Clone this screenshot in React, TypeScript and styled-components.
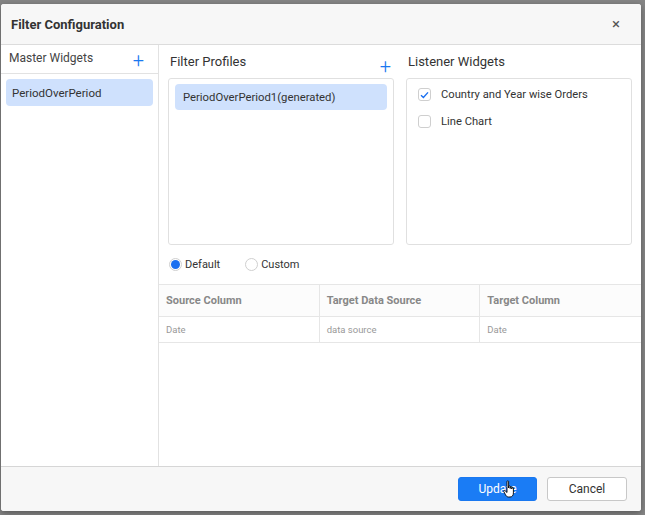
import React from "react";
import styled, { createGlobalStyle } from "styled-components";

const Global = createGlobalStyle`
  html, body { margin: 0; padding: 0; }
  body {
    background: #858585;
    font-family: Roboto, "Noto Sans", "Liberation Sans", sans-serif;
    width: 645px; height: 515px; overflow: hidden;
  }
`;

const Page = styled.div`
  width: 645px;
  height: 515px;
  padding: 4px 4px 4px 1px;
  box-sizing: border-box;
`;

const Dialog = styled.div`
  width: 640px;
  height: 507px;
  background: #fff;
  border-radius: 3px;
  box-shadow: 0 2px 6px rgba(0,0,0,0.35);
  display: flex;
  flex-direction: column;
  overflow: hidden;
`;

const Header = styled.div`
  height: 41px;
  flex: none;
  box-sizing: border-box;
  background: #f7f7f7;
  border-bottom: 1px solid #dcdcdc;
  display: flex;
  align-items: center;
  justify-content: space-between;
  padding: 0 21px 0 10px;
`;

const Title = styled.div`
  font-size: 13px;
  font-weight: 700;
  color: #333;
`;

const Close = styled.div`
  font-size: 15px;
  color: #555;
  line-height: 1;
`;

const Body = styled.div`
  flex: 1;
  display: grid;
  grid-template-columns: 158px 1fr;
  min-height: 0;
`;

const Left = styled.div`
  border-right: 1px solid #e2e2e2;
  display: flex;
  flex-direction: column;
`;

const LeftHead = styled.div`
  height: 29px;
  border-bottom: 1px solid #e2e2e2;
  display: flex;
  align-items: flex-start;
  justify-content: space-between;
  padding: 6px 14px 0 8px;
  box-sizing: border-box;
  font-size: 12px;
  color: #444;
`;

const Plus = styled.span<{ $top?: number }>`
  color: #1a78f0;
  font-size: 20px;
  font-weight: 300;
  line-height: 1;
  margin-top: ${(p) => p.$top ?? 0}px;
`;

const ItemList = styled.div`
  padding: 5px 5px;
`;

const SelItem = styled.div`
  background: #cfe1fd;
  border-radius: 4px;
  height: 27px;
  display: flex;
  align-items: center;
  padding: 0 6px;
  font-size: 11.5px;
  color: #333;
`;

const Right = styled.div`
  display: flex;
  flex-direction: column;
`;

const Columns = styled.div`
  display: grid;
  grid-template-columns: 226px 226px;
  column-gap: 12px;
  padding: 0 9px;
`;

const Col = styled.div`
  display: flex;
  flex-direction: column;
`;

const ColHead = styled.div`
  height: 33px;
  display: flex;
  align-items: flex-start;
  justify-content: space-between;
  padding: 9px 3px 0 2px;
  box-sizing: border-box;
  font-size: 13px;
  color: #333;
`;

const Box = styled.div`
  height: 167px;
  border: 1px solid #e0e0e0;
  border-radius: 3px;
  box-sizing: border-box;
`;

const ProfileList = styled.div`
  padding: 5px 6px;
`;

const ProfileItem = styled(SelItem)`
  height: 26px;
  padding: 0 8px;
  font-size: 11.3px;
`;

const CheckList = styled.div`
  padding: 9px 11px;
  display: flex;
  flex-direction: column;
  gap: 14px;
`;

const CheckRow = styled.div`
  display: flex;
  align-items: center;
  gap: 10px;
  font-size: 11.2px;
  color: #333;
`;

const CheckBox = styled.span`
  width: 13px;
  height: 13px;
  border: 1px solid #cfcfcf;
  border-radius: 3px;
  background: #fff;
  display: inline-flex;
  align-items: center;
  justify-content: center;
  box-sizing: border-box;
`;

const RadioRow = styled.div`
  display: flex;
  align-items: center;
  height: 39px;
  padding: 0 10px;
  gap: 25px;
  font-size: 11px;
  color: #333;
`;

const RadioItem = styled.label`
  display: flex;
  align-items: center;
  gap: 3px;
`;

const Radio = styled.span<{ $checked?: boolean }>`
  width: 13px;
  height: 13px;
  border-radius: 50%;
  box-sizing: border-box;
  border: 1px solid #cfcfcf;
  background: #fff;
  display: inline-flex;
  align-items: center;
  justify-content: center;
  &::after {
    content: "";
    width: 9px;
    height: 9px;
    border-radius: 50%;
    background: ${(p) => (p.$checked ? "#1a6ff0" : "transparent")};
  }
`;

const Table = styled.div`
  border-top: 1px solid #e6e6e6;
  display: grid;
  grid-template-columns: 1fr 1fr 1fr;
`;

const Th = styled.div<{ $last?: boolean }>`
  height: 32px;
  box-sizing: border-box;
  border-bottom: 1px solid #e6e6e6;
  border-right: ${(p) => (p.$last ? "none" : "1px solid #e6e6e6")};
  background: #fcfcfc;
  display: flex;
  align-items: center;
  padding: 0 7px;
  font-size: 11px;
  font-weight: 700;
  color: #888;
`;

const Td = styled.div<{ $last?: boolean }>`
  height: 26px;
  box-sizing: border-box;
  border-bottom: 1px solid #e6e6e6;
  border-right: ${(p) => (p.$last ? "none" : "1px solid #e6e6e6")};
  display: flex;
  align-items: center;
  padding: 0 7px;
  font-size: 9.5px;
  color: #999;
`;

const Footer = styled.div`
  height: 45px;
  flex: none;
  box-sizing: border-box;
  background: #f7f7f7;
  border-top: 1px solid #d6d6d6;
  display: flex;
  justify-content: flex-end;
  align-items: flex-start;
  padding: 10px 14px 0 0;
  gap: 10px;
`;

const Button = styled.button<{ $primary?: boolean }>`
  position: relative;
  height: 24px;
  width: ${(p) => (p.$primary ? 79 : 80)}px;
  border-radius: 3px;
  border: 1px solid ${(p) => (p.$primary ? "#1a78f0" : "#c8c8c8")};
  background: ${(p) => (p.$primary ? "#1a7cf5" : "#fff")};
  color: ${(p) => (p.$primary ? "#fff" : "#333")};
  font-family: Roboto, "Liberation Sans", sans-serif;
  font-size: 12px;
  padding: 0;
`;

const Cursor = styled.svg`
  position: absolute;
  left: 44px;
  top: 2px;
`;

export default function App() {
  return (
    <Page>
      <Global />
      <Dialog>
        <Header>
          <Title>Filter Configuration</Title>
          <Close>×</Close>
        </Header>
        <Body>
          <Left>
            <LeftHead>
              <span>Master Widgets</span>
              <Plus $top={-1}>+</Plus>
            </LeftHead>
            <ItemList>
              <SelItem>PeriodOverPeriod</SelItem>
            </ItemList>
          </Left>
          <Right>
            <Columns>
              <Col>
                <ColHead>
                  <span>Filter Profiles</span>
                  <Plus $top={2}>+</Plus>
                </ColHead>
                <Box>
                  <ProfileList>
                    <ProfileItem>PeriodOverPeriod1(generated)</ProfileItem>
                  </ProfileList>
                </Box>
              </Col>
              <Col>
                <ColHead>
                  <span>Listener Widgets</span>
                </ColHead>
                <Box>
                  <CheckList>
                    <CheckRow>
                      <CheckBox>
                        <svg width="9" height="8" viewBox="0 0 9 8">
                          <path d="M1 4.2 L3.4 6.4 L8 1.4" stroke="#1a6ff0" strokeWidth="1.4" fill="none" />
                        </svg>
                      </CheckBox>
                      Country and Year wise Orders
                    </CheckRow>
                    <CheckRow>
                      <CheckBox />
                      Line Chart
                    </CheckRow>
                  </CheckList>
                </Box>
              </Col>
            </Columns>
            <RadioRow>
              <RadioItem>
                <Radio $checked />
                Default
              </RadioItem>
              <RadioItem>
                <Radio />
                Custom
              </RadioItem>
            </RadioRow>
            <Table>
              <Th>Source Column</Th>
              <Th>Target Data Source</Th>
              <Th $last>Target Column</Th>
              <Td>Date</Td>
              <Td>data source</Td>
              <Td $last>Date</Td>
            </Table>
          </Right>
        </Body>
        <Footer>
          <Button $primary>
            Update
            <Cursor width="14" height="20" viewBox="0 0 14 20">
              <path
                d="M4 1.5 C4 0.7 5.6 0.7 5.6 1.5 L5.6 8 L5.6 6.5 C5.6 5.7 7.2 5.7 7.2 6.5 L7.2 8.5 L7.2 7.2 C7.2 6.4 8.8 6.4 8.8 7.2 L8.8 9 L8.8 8 C8.8 7.2 10.4 7.2 10.4 8 L10.4 13 C10.4 15.5 9 17 7 17 L5.5 17 C4 17 3.2 16 2.5 14.8 L0.8 11.5 C0.4 10.7 1.4 10 2 10.6 L4 12.5 Z"
                fill="#fff"
                stroke="#000"
                strokeWidth="0.9"
                strokeLinejoin="round"
              />
            </Cursor>
          </Button>
          <Button>Cancel</Button>
        </Footer>
      </Dialog>
    </Page>
  );
}
